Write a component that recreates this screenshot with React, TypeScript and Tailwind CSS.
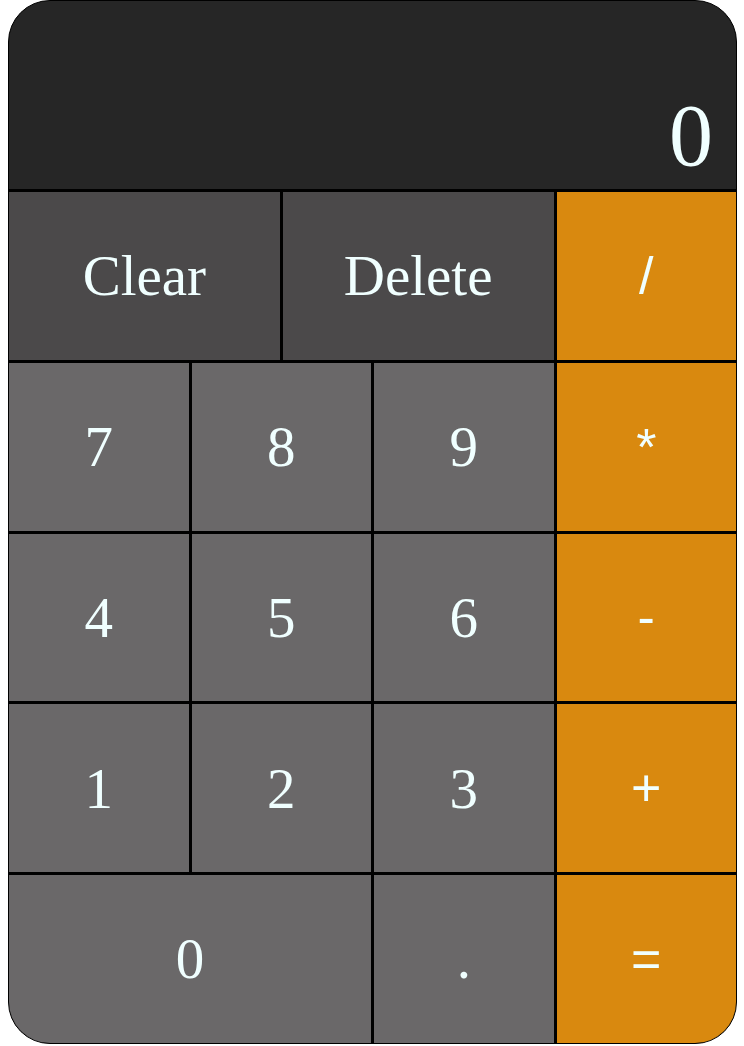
import React from "react";

const serif = { fontFamily: '"Liberation Serif", "Times New Roman", serif' };

function Btn({
  label,
  cls,
  font,
}: {
  label: string;
  cls: string;
  font?: "sans" | "serif";
}) {
  return (
    <button
      className={`flex items-center justify-center text-[#f0ffff] ${cls} ${
        font === "sans"
          ? "font-['Liberation_Sans',Arial,sans-serif] text-[52px] leading-none"
          : "font-['Liberation_Serif','Times_New_Roman',serif] text-[57px]"
      }`}
    >
      {label}
    </button>
  );
}

export default function App() {
  const dark = "bg-[#4b494a]";
  const mid = "bg-[#6a6869]";
  const orange = "bg-[#d9890f]";
  return (
    <div className="w-[744px] h-[1046px] bg-white">
      <div className="ml-[8px] w-[729px] h-[1044px] rounded-[42px] border border-black bg-black overflow-hidden flex flex-col gap-[3px]">
        <div
          className="h-[188px] shrink-0 bg-[#262626] flex items-end justify-end pr-[23px] pb-[9px]"
          style={serif}
        >
          <span className="text-[88px] leading-none text-[#f0ffff]">0</span>
        </div>
        <div className="flex-1 grid grid-cols-8 grid-rows-5 gap-[3px]">
          <Btn label="Clear" cls={`col-span-3 ${dark}`} />
          <Btn label="Delete" cls={`col-span-3 ${dark}`} />
          <Btn label="/" cls={`col-span-2 ${orange}`} font="sans" />
          <Btn label="7" cls={`col-span-2 ${mid}`} />
          <Btn label="8" cls={`col-span-2 ${mid}`} />
          <Btn label="9" cls={`col-span-2 ${mid}`} />
          <Btn label="*" cls={`col-span-2 ${orange}`} font="sans" />
          <Btn label="4" cls={`col-span-2 ${mid}`} />
          <Btn label="5" cls={`col-span-2 ${mid}`} />
          <Btn label="6" cls={`col-span-2 ${mid}`} />
          <Btn label="-" cls={`col-span-2 ${orange}`} font="sans" />
          <Btn label="1" cls={`col-span-2 ${mid}`} />
          <Btn label="2" cls={`col-span-2 ${mid}`} />
          <Btn label="3" cls={`col-span-2 ${mid}`} />
          <Btn label="+" cls={`col-span-2 ${orange}`} font="sans" />
          <Btn label="0" cls={`col-span-4 ${mid}`} />
          <Btn label="." cls={`col-span-2 ${mid}`} />
          <Btn label="=" cls={`col-span-2 ${orange}`} font="sans" />
        </div>
      </div>
    </div>
  );
}
